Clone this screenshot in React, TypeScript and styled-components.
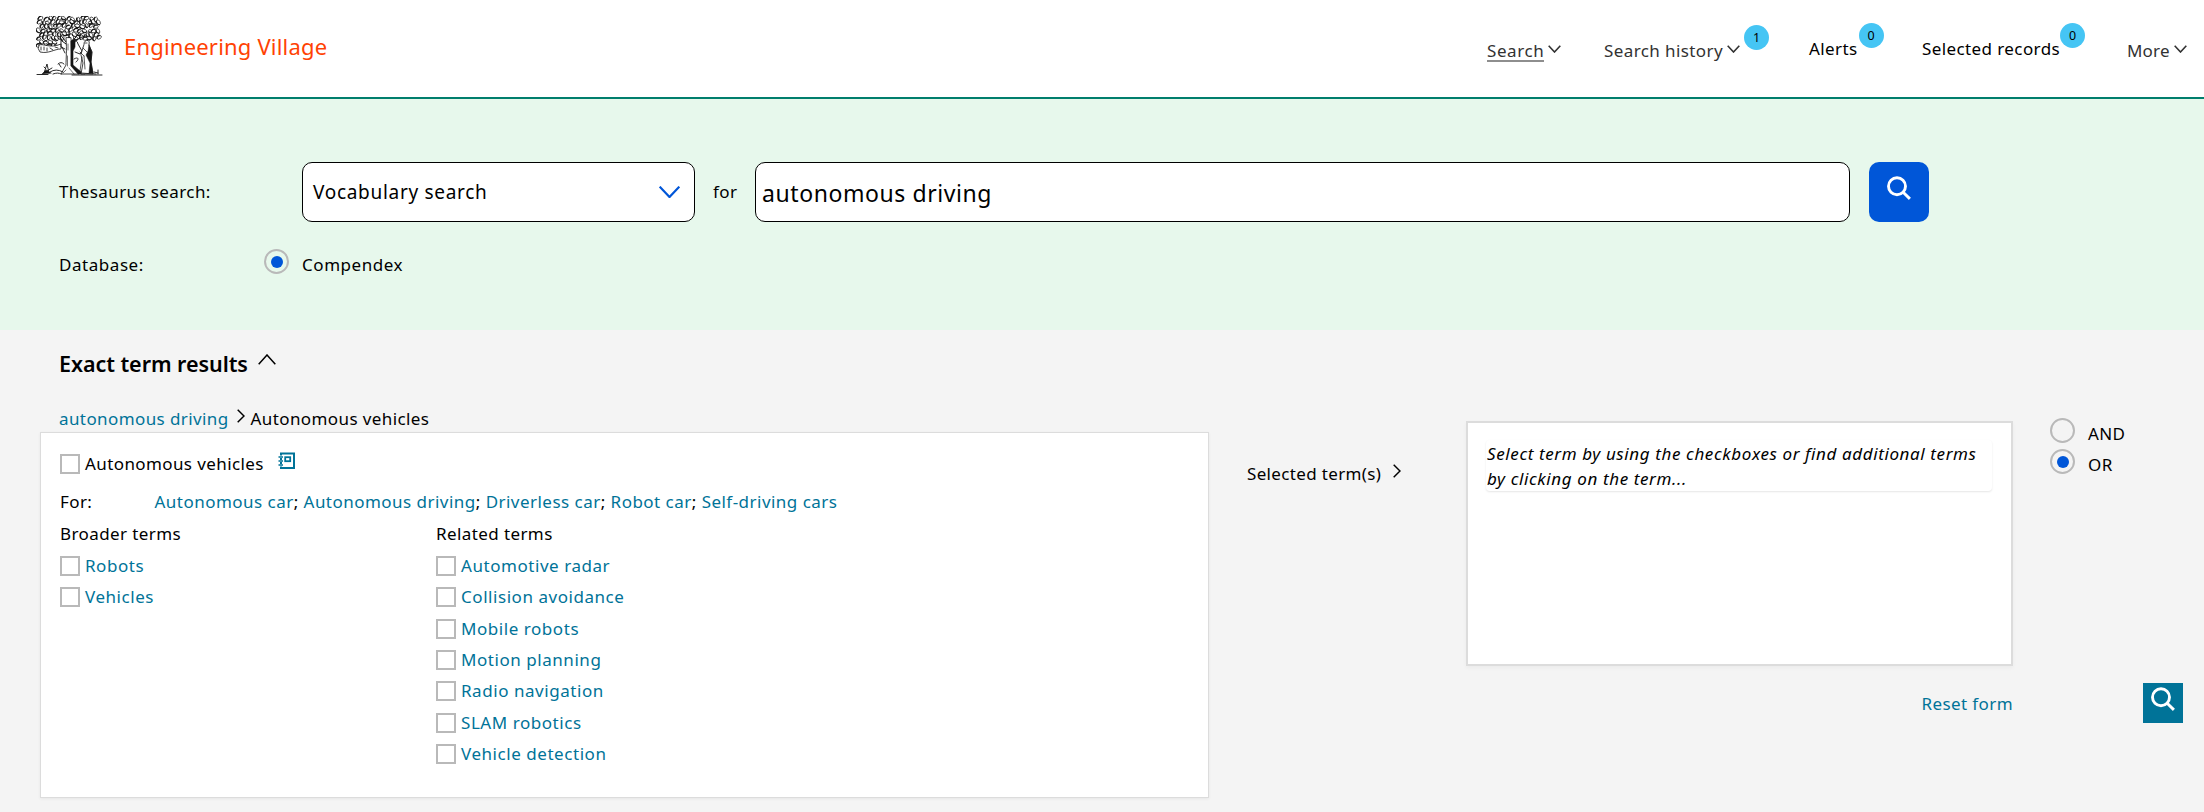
import React from 'react';
import styled, { createGlobalStyle, css } from 'styled-components';

const GlobalStyle = createGlobalStyle`
  *, *::before, *::after { box-sizing: border-box; }
  body {
    margin: 0;
    background: #f4f4f4;
    color: #000;
    font: 17px/24px "Noto Sans", "Open Sans", sans-serif;
    letter-spacing: 0.4px;
    overflow: hidden;
  }
  svg { display: block; flex: none; }
`;

const Page = styled.div`
  width: 100%;
  height: 812px;
  display: flex;
  flex-direction: column;
  white-space: nowrap;
`;

/* Header */
const Header = styled.header`
  flex: none;
  height: 99px;
  border-bottom: 2px solid #007e6d;
  background: #fff;
  display: flex;
  justify-content: space-between;
`;
const Brand = styled.a`
  display: flex;
  padding: 16px 0 0 36px;
`;
const BrandName = styled.span`
  margin: 15px 0 0 21px;
  font-size: 22px;
  line-height: 30px;
  letter-spacing: 0.2px;
  color: #ff4203;
`;
const Nav = styled.nav`
  display: grid;
  grid-template-columns: 117px 205px 113px 205px 77px;
`;
const NavItem = styled.div<{ $muted?: boolean }>`
  display: flex;
  align-items: flex-start;
  padding-top: ${(p) => (p.$muted ? 39 : 37)}px;
  color: ${(p) => (p.$muted ? '#323232' : '#000')};
  svg { margin: 6px 0 0 4px; }
`;
const NavLabel = styled.span<{ $active?: boolean; $spacing?: number }>`
  letter-spacing: ${(p) => p.$spacing ?? 0.4}px;
  height: 23px;
  ${(p) => p.$active && css`border-bottom: 2px solid #8e8e8e;`}
`;
const Badge = styled.span<{ $gap: number }>`
  width: 25px;
  height: 25px;
  margin-left: ${(p) => p.$gap}px;
  margin-top: -14px;
  border-radius: 50%;
  background: #45c5f4;
  display: flex;
  align-items: center;
  justify-content: center;
  font-size: 12.5px;
  letter-spacing: 0;
  color: #000;
`;

/* Search form */
const SearchBand = styled.section`
  flex: none;
  height: 231px;
  padding: 63px 0 0 59px;
  background: #e7f8ec;
`;
const FormRow = styled.div<{ $height: number }>`
  display: flex;
  align-items: center;
  height: ${(p) => p.$height}px;
`;
const FormLabel = styled.label<{ $width: number }>`
  width: ${(p) => p.$width}px;
`;
const SelectBox = styled.div`
  width: 393px;
  height: 60px;
  padding: 0 14px 0 10px;
  border: 1px solid #000;
  border-radius: 10px;
  background: #fff;
  display: flex;
  align-items: center;
  justify-content: space-between;
  font-size: 19px;
  letter-spacing: 0.7px;
`;
const Connector = styled.span`
  width: 60px;
  padding-left: 18px;
`;
const QueryInput = styled.input`
  width: 1095px;
  height: 60px;
  padding: 2px 6px 0;
  border: 1px solid #000;
  border-radius: 10px;
  background: #fff;
  color: #000;
  font: 23px "Noto Sans", sans-serif;
  letter-spacing: 0.58px;
  outline: none;
`;
const SubmitButton = styled.button`
  width: 60px;
  height: 60px;
  margin-left: 19px;
  padding: 0 0 8px;
  border: 0;
  border-radius: 10px;
  background: #0056d8;
  display: flex;
  align-items: center;
  justify-content: center;
`;
const DatabaseRow = styled.div`
  display: flex;
  margin-top: 27px;
`;
const DatabaseText = styled.span<{ $width?: number }>`
  width: ${(p) => p.$width ?? 110}px;
  padding-top: 4px;
  letter-spacing: 0.55px;
`;
const Radio = styled.span<{ $checked?: boolean }>`
  flex: none;
  width: 25px;
  height: 25px;
  margin-right: 13px;
  border: 2px solid #b9b9b9;
  border-radius: 50%;
  display: flex;
  align-items: center;
  justify-content: center;
  &::after {
    content: "";
    width: 12px;
    height: 12px;
    border-radius: 50%;
    background: ${(p) => (p.$checked ? '#0056d8' : 'transparent')};
  }
`;

/* Results */
const Results = styled.main`
  flex: 1;
  min-height: 0;
  display: flex;
  align-items: flex-start;
`;
const TermsColumn = styled.section`
  width: 1169px;
  margin-left: 40px;
`;
const Heading = styled.h2`
  display: flex;
  height: 60px;
  margin: 20px 0 0;
  padding: 0 0 0 19px;
  font-size: 21.5px;
  line-height: 28px;
  font-weight: 600;
  letter-spacing: -0.05px;
  svg { margin: 4px 0 0 10px; }
`;
const Crumbs = styled.div`
  display: flex;
  height: 22px;
  margin-top: -3px;
  padding-left: 19px;
  svg { margin: 2px 6px 0 8px; }
`;
const Link = styled.a`
  color: #007398;
`;
const Panel = styled.div`
  height: 366px;
  margin-top: 3px;
  padding: 19px 19px 0;
  border: 1px solid #dcdcdc;
  background: #fff;
  box-shadow: 0 1px 3px rgba(0, 0, 0, 0.06);
`;
const CheckRow = styled.div`
  display: flex;
  height: 31.33px;
  padding-top: 2px;
`;
const Checkbox = styled.span`
  flex: none;
  width: 20px;
  height: 20px;
  margin: 0 5px 0 0;
  border: 2px solid #b9b9b9;
  background: #fff;
`;
const CheckLabel = styled.span<{ $spacing?: number }>`
  margin-top: -2px;
  letter-spacing: ${(p) => p.$spacing ?? 0.55}px;
`;
const MainTerm = styled.div`
  display: flex;
  height: 38px;
  padding-top: 2px;
  svg { margin: -2px 0 0 14px; }
`;
const UsedFor = styled.div`
  display: flex;
  height: 32px;
`;
const UsedForLabel = styled.span`
  width: 94.5px;
`;
const UsedForList = styled.span`
  letter-spacing: 0.47px;
`;
const TermColumns = styled.div`
  display: grid;
  grid-template-columns: 376px 1fr;
`;
const ColumnTitle = styled.div`
  height: 32px;
`;
const SelectedLabel = styled.div`
  display: flex;
  width: 219px;
  margin: 132px 0 0 38px;
  letter-spacing: 0.35px;
  svg { margin: 2px 0 0 12px; }
`;
const SelectedColumn = styled.section`
  width: 547px;
  margin-top: 91px;
`;
const SelectedBox = styled.div`
  height: 245px;
  padding: 17px 19px 0 18px;
  border: 2px solid #dcdcdc;
  background: #fff;
  box-shadow: 0 2px 4px rgba(0, 0, 0, 0.04);
`;
const Hint = styled.p`
  height: 51px;
  margin: 0;
  padding: 1px 0 0 1px;
  border-radius: 4px;
  box-shadow: 0 1px 2px rgba(0, 0, 0, 0.1);
  line-height: 25px;
  font-style: italic;
  letter-spacing: 0.61px;
`;
const Reset = styled.div`
  margin-top: 26px;
  text-align: right;
`;
const Operators = styled.aside`
  width: 133px;
  margin: 88px 0 0 37px;
`;
const OperatorRow = styled.label`
  display: flex;
  height: 31px;
`;
const OperatorText = styled.span`
  padding-top: 4px;
`;
const FloatingSearch = styled.button`
  width: 40px;
  height: 40px;
  margin: 203px 0 0 93px;
  padding: 4px 8px;
  border: 0;
  background: #007398;
  display: flex;
`;

const Chevron = ({ dir, w, h, color = '#000', stroke = 1.6 }: {
  dir: 'down' | 'up' | 'right'; w: number; h: number; color?: string; stroke?: number;
}) => {
  const points = {
    down: `0.7,0.7 ${w / 2},${h - 1} ${w - 0.7},0.7`,
    up: `0.7,${h - 0.7} ${w / 2},1 ${w - 0.7},${h - 0.7}`,
    right: `0.7,0.7 ${w - 1},${h / 2} 0.7,${h - 0.7}`,
  }[dir];
  return (
    <svg width={w} height={h} viewBox={`0 0 ${w} ${h}`}>
      <polyline points={points} fill="none" stroke={color} strokeWidth={stroke} />
    </svg>
  );
};

const Magnifier = () => (
  <svg width="24" height="24" viewBox="0 0 24 24" fill="none" stroke="#fff" strokeWidth="2.9">
    <circle cx="10" cy="10.2" r="8.5" />
    <path d="M16.2 16.2 22.9 22.9" />
  </svg>
);

const Notebook = () => (
  <svg width="18" height="18" viewBox="0 0 18 18" fill="none" stroke="#007398" strokeWidth="2">
    <path d="M3 3.5V1.5H16V16H3V14.5M3 6v2M3 10v2" />
    <path d="M0.5 5H5M0.5 9H5M0.5 13H5" strokeWidth="1.7" />
    <rect x="7.2" y="5.2" width="5" height="4" strokeWidth="1.8" />
  </svg>
);

/* Foliage of the publisher's tree, scattered by a fixed sequence. */
const leaves = (() => {
  let seed = 41;
  const rnd = () => (seed = (seed * 16807) % 2147483647) / 2147483647;
  const out: { x: number; y: number; r: number; a: number }[] = [];
  let row = 0;
  for (let y = 2.6; y < 33; y += 3.9) {
    row += 1;
    for (let x = 3 + (row % 2) * 2.2; x < 65; x += 4.6) {
      if (y > 19 && x > 27 && x < 38) continue;
      if (y > 23 && x > 22) continue;
      out.push({ x: x + rnd() * 1.8 - 0.9, y: y + rnd() * 1.8 - 0.9, r: 1.5 + rnd() * 0.8, a: rnd() * 180 });
    }
  }
  return out;
})();

const TreeLogo = () => (
  <svg width="67" height="60" viewBox="0 0 67 60" fill="none" stroke="#151515" strokeLinecap="round">
    {leaves.map((l, i) => (
      <g key={i} transform={`translate(${l.x} ${l.y}) rotate(${l.a})`}>
        <ellipse rx={l.r + 0.5} ry={l.r * 0.8} fill="#fff" strokeWidth="0.65" />
        <path d="M-1.6 1.5Q0.4 2.6 2 0.8" strokeWidth="1.15" />
      </g>
    ))}
    <path d="M24 18 30 26M43 17 36 26M33 15V26M22 22 30 28M46 21 36 26M33 20V24" strokeWidth="1" />
    <path d="M30 22C31 34 30 43 30 49L25 58H43L36 50 35 22Z" fill="#fff" strokeWidth="0.8" />
    <path d="M32 28V34M31.5 40V50M30 54 27 57M33 52 38 58" strokeWidth="0.6" />
    <path d="M35 25Q37 22 39 25V31L37 35V49L44 55 49 58H42L35 50Z" fill="#151515" strokeWidth="0.6" />
    <path d="M3 29C8 27 13 33 25 28V33C18 33 13 38 4 36Q1 33 3 29Z" fill="#fff" strokeWidth="0.8" />
    <path d="M5 31V34M8 31V34M11 32V35M14 32 17 34M19 31 22 32" strokeWidth="0.8" />
    <path d="M25 25V31L29 33M26 31 29 37" strokeWidth="0.9" />
    <path d="M38 27Q41 23 42 28L46 35 44 38 39 36" strokeWidth="0.9" />
    <path d="M48 28Q48 24 52 24.5Q54 25 53 29L56 36 55 46 57 58H45L47 47 45 39Z" fill="#fff" strokeWidth="0.8" />
    <path d="M53 29 56 36 55 46 57 57H53L54 47 50 39 52 35Z" fill="#151515" strokeWidth="0.5" />
    <path d="M49 27H51M47 32 51 36M48 40 49 53M44 36 48 40M46 41 44 55" strokeWidth="0.7" />
    <path d="M38 43C43 40 43 44 40 46M22 48Q25 45 28 48M23 48 25 51" strokeWidth="0.9" />
    <path d="M1 58.5H12M8 57 11 48 13 57M11 55 16 52M10 53 8 51M14 56Q20 52 27 56M17 58Q22 56 25 58M36 59H66M44 57 60 58M58 56 62 57M62 54V58" strokeWidth="0.9" />
    <path d="M6 58 10 54 15 57Z" fill="#151515" strokeWidth="0.5" />
  </svg>
);

const synonyms = ['Autonomous car', 'Autonomous driving', 'Driverless car', 'Robot car', 'Self-driving cars'];
const broader = ['Robots', 'Vehicles'];
const related = ['Automotive radar', 'Collision avoidance', 'Mobile robots', 'Motion planning', 'Radio navigation', 'SLAM robotics', 'Vehicle detection'];

const TermList = ({ title, terms }: { title: string; terms: string[] }) => (
  <div>
    <ColumnTitle>{title}</ColumnTitle>
    {terms.map((term) => (
      <CheckRow key={term}>
        <Checkbox />
        <CheckLabel><Link>{term}</Link></CheckLabel>
      </CheckRow>
    ))}
  </div>
);

export default function App() {
  return (
    <Page>
      <GlobalStyle />
      <Header>
        <Brand>
          <TreeLogo />
          <BrandName>Engineering Village</BrandName>
        </Brand>
        <Nav>
          <NavItem $muted>
            <NavLabel $active $spacing={0.6}>Search</NavLabel>
            <Chevron dir="down" w={13} h={8} color="#323232" />
          </NavItem>
          <NavItem $muted>
            <NavLabel>Search history</NavLabel>
            <Chevron dir="down" w={13} h={8} color="#323232" />
            <Badge $gap={4}>1</Badge>
          </NavItem>
          <NavItem>
            <NavLabel>Alerts</NavLabel>
            <Badge $gap={1}>0</Badge>
          </NavItem>
          <NavItem>
            <NavLabel>Selected records</NavLabel>
            <Badge $gap={0}>0</Badge>
          </NavItem>
          <NavItem $muted>
            <NavLabel $spacing={0.2}>More</NavLabel>
            <Chevron dir="down" w={13} h={8} color="#323232" />
          </NavItem>
        </Nav>
      </Header>

      <SearchBand>
        <FormRow $height={60}>
          <FormLabel $width={243}>Thesaurus search:</FormLabel>
          <SelectBox>
            Vocabulary search
            <Chevron dir="down" w={21} h={12} color="#0056d8" stroke={2.2} />
          </SelectBox>
          <Connector>for</Connector>
          <QueryInput defaultValue="autonomous driving" />
          <SubmitButton><Magnifier /></SubmitButton>
        </FormRow>
        <DatabaseRow>
          <DatabaseText $width={205}>Database:</DatabaseText>
          <Radio $checked />
          <DatabaseText>Compendex</DatabaseText>
        </DatabaseRow>
      </SearchBand>

      <Results>
        <TermsColumn>
          <Heading>
            Exact term results
            <Chevron dir="up" w={18} h={11} stroke={1.5} />
          </Heading>
          <Crumbs>
            <Link>autonomous driving</Link>
            <Chevron dir="right" w={8} h={14} stroke={1.5} />
            <span>Autonomous vehicles</span>
          </Crumbs>
          <Panel>
            <MainTerm>
              <Checkbox />
              <CheckLabel $spacing={0.4}>Autonomous vehicles</CheckLabel>
              <Notebook />
            </MainTerm>
            <UsedFor>
              <UsedForLabel>For:</UsedForLabel>
              <UsedForList>
                {synonyms.map((name, i) => (
                  <React.Fragment key={name}>
                    {i > 0 && '; '}
                    <Link>{name}</Link>
                  </React.Fragment>
                ))}
              </UsedForList>
            </UsedFor>
            <TermColumns>
              <TermList title="Broader terms" terms={broader} />
              <TermList title="Related terms" terms={related} />
            </TermColumns>
          </Panel>
        </TermsColumn>

        <SelectedLabel>
          Selected term(s)
          <Chevron dir="right" w={8} h={14} stroke={1.5} />
        </SelectedLabel>

        <SelectedColumn>
          <SelectedBox>
            <Hint>
              Select term by using the checkboxes or find additional terms
              <br />
              by clicking on the term...
            </Hint>
          </SelectedBox>
          <Reset><Link>Reset form</Link></Reset>
        </SelectedColumn>

        <Operators>
          <OperatorRow><Radio /><OperatorText>AND</OperatorText></OperatorRow>
          <OperatorRow><Radio $checked /><OperatorText>OR</OperatorText></OperatorRow>
          <FloatingSearch><Magnifier /></FloatingSearch>
        </Operators>
      </Results>
    </Page>
  );
}
